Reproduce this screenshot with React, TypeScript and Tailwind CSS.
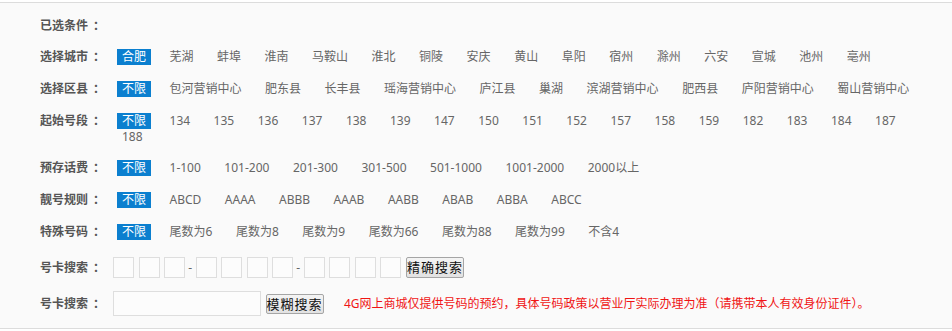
import React from "react";

const FONT = { fontFamily: '"Noto Sans", "Noto Sans CJK SC", sans-serif' };

function Label({ text, w }: { text: string; w: string }) {
  return (
    <div className={"shrink-0 font-bold text-[#555] text-[12px] leading-[16px] whitespace-nowrap " + w}>
      {text}
      <span className="pl-[5px]">：</span>
    </div>
  );
}

type RowProps = { label: string; items: string[]; active?: number; className?: string };

function OptionRow({ label, items, active, className }: RowProps) {
  return (
    <div className={"flex items-start " + (className ?? "")}>
      <Label text={label} w="w-[77px]" />
      <div className="flex flex-1 flex-wrap gap-x-[13.5px] text-[12px] leading-[16px]">
        {items.map((it, i) =>
          i === active ? (
            <span key={i} className="px-[5px] bg-[#0b7fcf] text-white whitespace-nowrap">
              {it}
            </span>
          ) : (
            <span key={i} className="px-[5px] text-[#666] whitespace-nowrap">
              {it}
            </span>
          )
        )}
      </div>
    </div>
  );
}

function Box() {
  return <span className="block w-[21px] h-[21px] border border-[#dedede] bg-[#fcfcfc] shrink-0" />;
}

function Dash() {
  return (
    <span className="flex w-[1.5px] justify-center overflow-visible text-[12px] text-[#666] leading-[16px]">
      -
    </span>
  );
}

export default function App() {
  const cities = ["合肥", "芜湖", "蚌埠", "淮南", "马鞍山", "淮北", "铜陵", "安庆", "黄山", "阜阳", "宿州", "滁州", "六安", "宣城", "池州", "亳州"];
  const districts = ["不限", "包河营销中心", "肥东县", "长丰县", "瑶海营销中心", "庐江县", "巢湖", "滨湖营销中心", "肥西县", "庐阳营销中心", "蜀山营销中心"];
  const prefixes = ["不限", "134", "135", "136", "137", "138", "139", "147", "150", "151", "152", "157", "158", "159", "182", "183", "184", "187", "188"];
  const prepay = ["不限", "1-100", "101-200", "201-300", "301-500", "501-1000", "1001-2000", "2000以上"];
  const rules = ["不限", "ABCD", "AAAA", "ABBB", "AAAB", "AABB", "ABAB", "ABBA", "ABCC"];
  const special = ["不限", "尾数为6", "尾数为8", "尾数为9", "尾数为66", "尾数为88", "尾数为99", "不含4"];

  return (
    <div className="w-[952px] h-[331px] bg-white pt-[2px]" style={FONT}>
      <div className="h-[327px] box-border border-y border-[#dcdcdc] bg-[#fafafa] pl-[40px] pr-[22px] pt-[15px] flex flex-col">
        <Label text="已选条件" w="" />
        <OptionRow className="mt-[15px]" label="选择城市" items={cities} active={0} />
        <OptionRow className="mt-[16px]" label="选择区县" items={districts} active={0} />
        <OptionRow className="mt-[16px]" label="起始号段" items={prefixes} active={0} />
        <OptionRow className="mt-[15px]" label="预存话费" items={prepay} active={0} />
        <OptionRow className="mt-[16px]" label="靓号规则" items={rules} active={0} />
        <OptionRow className="mt-[16px]" label="特殊号码" items={special} active={0} />

        <div className="mt-[17px] flex items-center h-[21px]">
          <Label text="号卡搜索" w="w-[73px]" />
          <div className="flex items-center gap-[4.5px]">
            <Box />
            <Box />
            <Box />
            <Dash />
            <Box />
            <Box />
            <Box />
            <Box />
            <Dash />
            <Box />
            <Box />
            <Box />
            <Box />
            <button className="ml-[0.5px] w-[58px] h-[21px] border border-[#a5a5a5] bg-gradient-to-b from-[#f4f4f4] to-[#e2e2e2] text-[#111] text-[13px] leading-[19px] tracking-[1px] rounded-[2px]">
              精确搜索
            </button>
          </div>
        </div>

        <div className="mt-[13px] flex items-center h-[25px]">
          <Label text="号卡搜索" w="w-[73px]" />
          <span className="block w-[148px] h-[25px] border border-[#dedede] bg-[#fcfcfc]" />
          <button className="ml-[4.5px] w-[58px] h-[20px] border border-[#a5a5a5] bg-gradient-to-b from-[#f4f4f4] to-[#e2e2e2] text-[#111] text-[13px] leading-[18px] tracking-[1px] rounded-[2px]">
            模糊搜索
          </button>
          <span className="ml-[20.5px] text-[12px] leading-[16px] text-[#f01414] whitespace-nowrap">
            4G网上商城仅提供号码的预约，具体号码政策以营业厅实际办理为准（请携带本人有效身份证件）。
          </span>
        </div>
      </div>
    </div>
  );
}
